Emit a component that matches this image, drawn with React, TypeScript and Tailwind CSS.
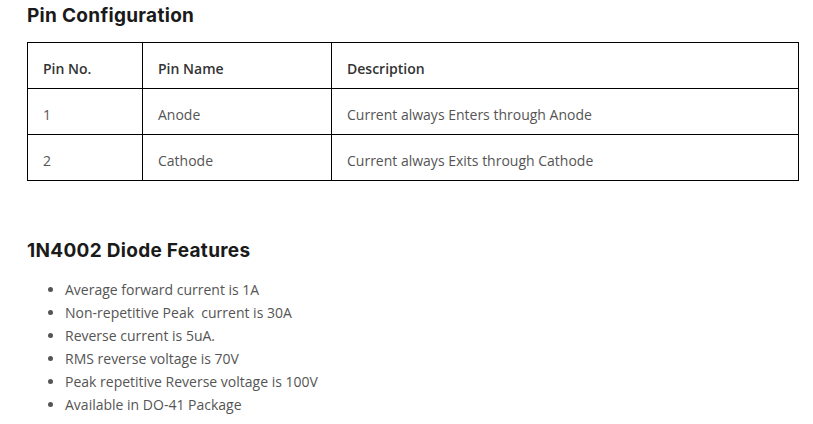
import React from 'react';

const pins = [
  { no: '1', name: 'Anode', desc: 'Current always Enters through Anode' },
  { no: '2', name: 'Cathode', desc: 'Current always Exits through Cathode' },
];

const features = [
  'Average forward current is 1A',
  'Non-repetitive Peak\u00a0 current is 30A',
  'Reverse current is 5uA.',
  'RMS reverse voltage is 70V',
  'Peak repetitive Reverse voltage is 100V',
  'Available in DO-41 Package',
];

const App = () => {
  return (
    <div className="min-h-screen bg-white px-[27px] pt-[4px] font-['Open_Sans',sans-serif] text-[14px] text-[#555]">
      <h2 className="font-['Inter',sans-serif] text-[19px] font-bold leading-[24px] tracking-[0.3px] text-[#1a1a1a]">Pin Configuration</h2>

      <table className="mt-[14px] w-[772px] border-collapse">
        <thead>
          <tr className="h-[46px]">
            <th className="w-[115px] border border-black px-[15px] pt-[6px] text-left font-semibold text-[#333]">Pin No.</th>
            <th className="w-[189px] border border-black px-[15px] pt-[6px] text-left font-semibold text-[#333]">Pin Name</th>
            <th className="border border-black px-[15px] pt-[6px] text-left font-semibold text-[#333]">Description</th>
          </tr>
        </thead>
        <tbody>
          {pins.map(p => (
            <tr key={p.no} className="h-[46px]">
              <td className="border border-black px-[15px] pt-[6px]">{p.no}</td>
              <td className="border border-black px-[15px] pt-[6px]">{p.name}</td>
              <td className="border border-black px-[15px] pt-[6px]">{p.desc}</td>
            </tr>
          ))}
        </tbody>
      </table>

      <h2 className="mt-[58px] font-['Inter',sans-serif] text-[19px] font-bold leading-[24px] tracking-[0.3px] text-[#1a1a1a]">1N4002 Diode Features</h2>

      <ul className="mt-[15px] list-disc pl-[38px] leading-[23px]">
        {features.map(f => (
          <li key={f}>{f}</li>
        ))}
      </ul>
    </div>
  );
};

export default App;
